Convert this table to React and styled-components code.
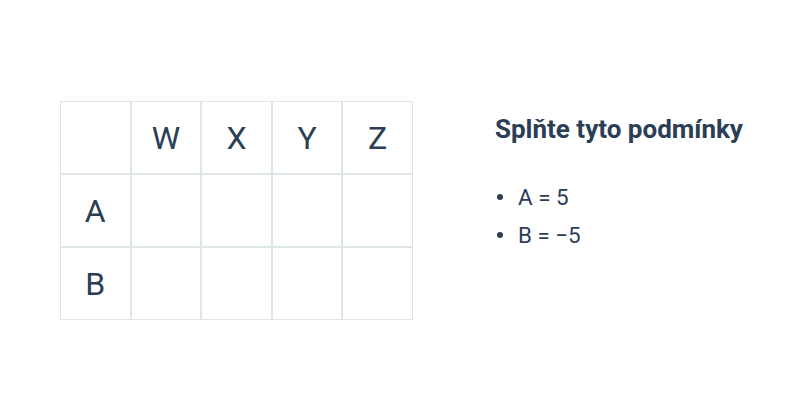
import React from 'react'
import styled, { createGlobalStyle } from 'styled-components'

const GlobalStyle = createGlobalStyle`
  body {
    margin: 0;
    background: #fff;
    font-family: Roboto, 'Liberation Sans', sans-serif;
    color: #2c3e55;
  }
`

const Page = styled.div`
  display: flex;
  align-items: flex-start;
  gap: 82px;
  padding: 101px 0 0 60px;
`

const Grid = styled.div`
  display: grid;
  grid-template-columns: repeat(5, 70.6px);
  grid-auto-rows: 73px;
`

const Cell = styled.div`
  box-sizing: border-box;
  border: 1px solid #dfe6e6;
  display: flex;
  align-items: center;
  justify-content: center;
  font-size: 32px;
  color: #2c3e55;
`

const Task = styled.div`
  padding-top: 13px;
`

const Heading = styled.h2`
  margin: 0;
  font-size: 26px;
  line-height: 30px;
  font-weight: 700;
  color: #2c3e55;
`

const Conditions = styled.ul`
  list-style: none;
  margin: 34px 0 0;
  padding: 0 0 0 2px;
`

const Condition = styled.li`
  display: flex;
  align-items: center;
  gap: 15px;
  font-size: 22.4px;
  line-height: 38px;
  &::before {
    content: '';
    width: 6px;
    height: 6px;
    border-radius: 50%;
    background: #2c3e55;
  }
`

const columns = ['', 'W', 'X', 'Y', 'Z']
const rows = ['A', 'B']

export default function App() {
  return (
    <>
      <GlobalStyle />
      <Page>
        <Grid>
          {columns.map((c, i) => (
            <Cell key={'h' + i}>{c}</Cell>
          ))}
          {rows.map(r =>
            columns.map((c, i) => <Cell key={r + i}>{i === 0 ? r : ''}</Cell>)
          )}
        </Grid>
        <Task>
          <Heading>Splňte tyto podmínky</Heading>
          <Conditions>
            <Condition>A = 5</Condition>
            <Condition>B = −5</Condition>
          </Conditions>
        </Task>
      </Page>
    </>
  )
}
